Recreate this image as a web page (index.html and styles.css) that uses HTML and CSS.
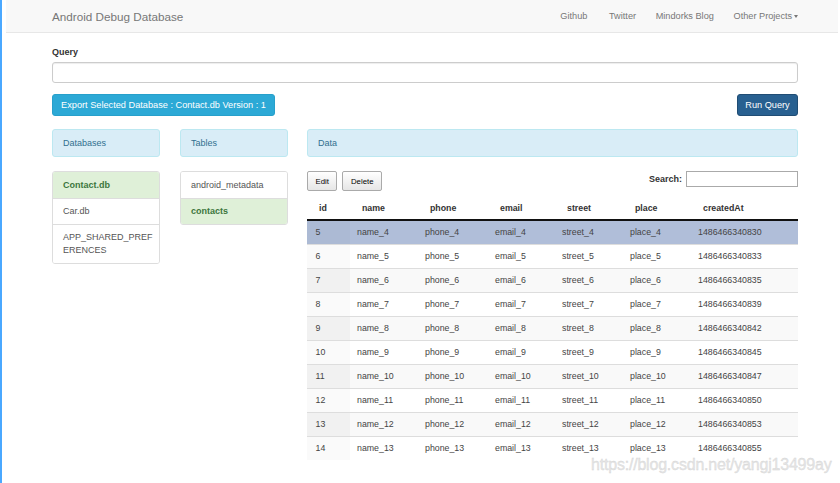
FILE: index.html
```html
<!DOCTYPE html>
<html lang="en">
<head>
<meta charset="utf-8">
<title>Android Debug Database</title>
<link rel="stylesheet" href="styles.css">
</head>
<body>
<div class="screen">
  <div class="strip"></div>
  <div class="page">
    <nav class="navbar">
      <div class="nav-inner">
        <span class="brand">Android Debug Database</span>
        <ul class="nav-links">
          <li>Github</li>
          <li>Twitter</li>
          <li>Mindorks Blog</li>
          <li>Other Projects<span class="caret"></span></li>
        </ul>
      </div>
    </nav>
    <main class="container">
      <label class="query-label">Query</label>
      <div class="query-input"></div>
      <div class="actions">
        <button class="btn btn-info">Export Selected Database : Contact.db Version : 1</button>
        <button class="btn btn-primary">Run Query</button>
      </div>
      <div class="grid">
        <section>
          <div class="panel-heading">Databases</div>
          <ul class="list-group">
            <li class="active">Contact.db</li>
            <li>Car.db</li>
            <li>APP_SHARED_PREFERENCES</li>
          </ul>
        </section>
        <section>
          <div class="panel-heading">Tables</div>
          <ul class="list-group">
            <li>android_metadata</li>
            <li class="active">contacts</li>
          </ul>
        </section>
        <section>
          <div class="panel-heading">Data</div>
          <div class="dt-top">
            <div class="dt-buttons">
              <button class="dt-button">Edit</button>
              <button class="dt-button">Delete</button>
            </div>
            <div class="dt-search">
              <span class="search-label">Search:</span>
              <span class="search-input"></span>
            </div>
          </div>
          <table class="data">
            <thead>
              <tr><th class="c-id">id</th><th class="c-name">name</th><th class="c-phone">phone</th><th class="c-email">email</th><th class="c-street">street</th><th class="c-place">place</th><th class="c-created">createdAt</th></tr>
            </thead>
            <tbody>
              <tr class="odd selected"><td>5</td><td>name_4</td><td>phone_4</td><td>email_4</td><td>street_4</td><td>place_4</td><td>1486466340830</td></tr>
              <tr class="even"><td>6</td><td>name_5</td><td>phone_5</td><td>email_5</td><td>street_5</td><td>place_5</td><td>1486466340833</td></tr>
              <tr class="odd"><td>7</td><td>name_6</td><td>phone_6</td><td>email_6</td><td>street_6</td><td>place_6</td><td>1486466340835</td></tr>
              <tr class="even"><td>8</td><td>name_7</td><td>phone_7</td><td>email_7</td><td>street_7</td><td>place_7</td><td>1486466340839</td></tr>
              <tr class="odd"><td>9</td><td>name_8</td><td>phone_8</td><td>email_8</td><td>street_8</td><td>place_8</td><td>1486466340842</td></tr>
              <tr class="even"><td>10</td><td>name_9</td><td>phone_9</td><td>email_9</td><td>street_9</td><td>place_9</td><td>1486466340845</td></tr>
              <tr class="odd"><td>11</td><td>name_10</td><td>phone_10</td><td>email_10</td><td>street_10</td><td>place_10</td><td>1486466340847</td></tr>
              <tr class="even"><td>12</td><td>name_11</td><td>phone_11</td><td>email_11</td><td>street_11</td><td>place_11</td><td>1486466340850</td></tr>
              <tr class="odd"><td>13</td><td>name_12</td><td>phone_12</td><td>email_12</td><td>street_12</td><td>place_12</td><td>1486466340853</td></tr>
              <tr class="even"><td>14</td><td>name_13</td><td>phone_13</td><td>email_13</td><td>street_13</td><td>place_13</td><td>1486466340855</td></tr>
            </tbody>
          </table>
        </section>
      </div>
    </main>
    <div class="watermark">https://blog.csdn.net/yangj13499ay</div>
  </div>
</div>
</body>
</html>
```

FILE: styles.css
```css
* { box-sizing: border-box; }
html, body { margin: 0; padding: 0; }
body {
  font-family: "Liberation Sans", Arial, sans-serif;
  color: #333;
  background: #fff;
  width: 840px;
  height: 483px;
  overflow: hidden;
}
.screen { display: flex; height: 483px; }
.strip { width: 2px; background: #4aa8ff; flex: none; }
.page { margin-left: 4px; width: 832px; position: relative; }

.navbar {
  height: 33px;
  background: #f8f8f8;
  border-bottom: 1px solid #e7e7e7;
}
.nav-inner {
  width: 746px;
  margin-left: 46px;
  height: 32px;
  display: flex;
  align-items: center;
  justify-content: space-between;
}
.brand { font-size: 11.7px; color: #777; }
.nav-links {
  list-style: none;
  margin: 0 -10px 0 0;
  padding: 0;
  display: flex;
}
.nav-links li {
  font-size: 9.2px;
  color: #777;
  padding: 0 9.8px;
  display: flex;
  align-items: center;
}
.nav-links li:first-child { padding-left: 0; margin-right: 2px; }
.caret {
  display: inline-block;
  width: 0; height: 0;
  margin-left: 2px;
  border-top: 3px solid #777;
  border-left: 2.5px solid transparent;
  border-right: 2.5px solid transparent;
}

.container { width: 746px; margin-left: 46px; }
.query-label {
  display: block;
  font-size: 9px;
  font-weight: bold;
  margin-top: 13px;
  height: 16px;
  line-height: 12px;
}
.query-input {
  height: 21px;
  border: 1px solid #ccc;
  border-radius: 3px;
  box-shadow: inset 0 1px 1px rgba(0,0,0,0.075);
}
.actions {
  margin-top: 11px;
  display: flex;
  justify-content: space-between;
}
.btn {
  font-family: inherit;
  height: 22px;
  font-size: 9.2px;
  border-radius: 3px;
  color: #fff;
  padding: 0 8px;
  border: 1px solid transparent;
}
.btn-info { background: #2ca9d6; border-color: #27a0cb; width: 223px; }
.btn-primary { background: #286090; border-color: #204d74; width: 61px; padding: 0; }

.grid {
  margin-top: 13px;
  display: grid;
  grid-template-columns: 108px 108px 1fr;
  column-gap: 20px;
}
.grid section:nth-child(3) { margin-left: -1px; }
.panel-heading {
  height: 28px;
  background: #d9edf7;
  border: 1px solid #bce8f1;
  border-radius: 3px;
  color: #31708f;
  font-size: 9px;
  padding: 0 10px;
  display: flex;
  align-items: center;
  margin-bottom: 14px;
}
.list-group {
  list-style: none;
  margin: 0;
  padding: 0;
  border: 1px solid #ddd;
  border-radius: 3px;
  overflow: hidden;
}
.list-group li {
  font-size: 9px;
  line-height: 13px;
  padding: 6px 5px 6px 10px;
  border-top: 1px solid #ddd;
  word-break: break-all;
  color: #555;
  background: #fff;
}
.list-group li:first-child { border-top: none; padding-top: 6.5px; padding-bottom: 6.5px; }
.list-group li.active { background: #dff0d8; color: #3c763d; font-weight: bold; }

.dt-top {
  display: flex;
  justify-content: space-between;
  align-items: flex-start;
  height: 26px;
}
.dt-buttons { display: flex; gap: 5px; }
.dt-button {
  font-family: inherit;
  font-size: 7.8px;
  height: 20px;
  padding: 0 7.5px;
  color: #000;
  border: 1px solid #aaa;
  border-radius: 2px;
  background: linear-gradient(#ffffff, #e6e6e6);
}
.dt-search { display: flex; align-items: center; gap: 4px; }
.search-label { font-size: 9px; font-weight: bold; }
.search-input {
  width: 112px;
  height: 16px;
  border: 1px solid #aaa;
  background: #fff;
}

table.data {
  width: 491px;
  border-collapse: collapse;
  table-layout: fixed;
  font-size: 8.8px;
}
table.data th {
  text-align: left;
  font-weight: bold;
  height: 23px;
  padding: 0 5px 0 12px;
  border-bottom: 2px solid #111;
  vertical-align: middle;
}
th.c-id { width: 43px; padding-left: 14px; }
th.c-name { width: 68px; }
th.c-phone { width: 70px; }
th.c-email { width: 67px; padding-left: 14px; }
th.c-street { width: 68px; }
th.c-place { width: 68px; padding-left: 14px; }
table.data td {
  height: 24px;
  padding: 0 7px;
  border-top: 1px solid #ddd;
  color: #444;
  white-space: nowrap;
}
table.data tbody tr:first-child td { border-top: none; }
table.data td:first-child { padding-left: 8.5px; }
tr.odd td { background: #f9f9f9; }
tr.odd td:first-child { background: #f1f1f1; }
tr.even td { background: #fff; }
tr.even td:first-child { background: #fafafa; }
tr.selected td { background: #b0bed9; }
tr.selected td:first-child { background: #acbad4; }

.watermark {
  position: absolute;
  left: 585px;
  top: 456px;
  font-size: 16px;
  color: #e6e6e6;
  letter-spacing: -0.2px;
  -webkit-text-stroke: 0.3px #d2d2d2;
  white-space: nowrap;
}
```
